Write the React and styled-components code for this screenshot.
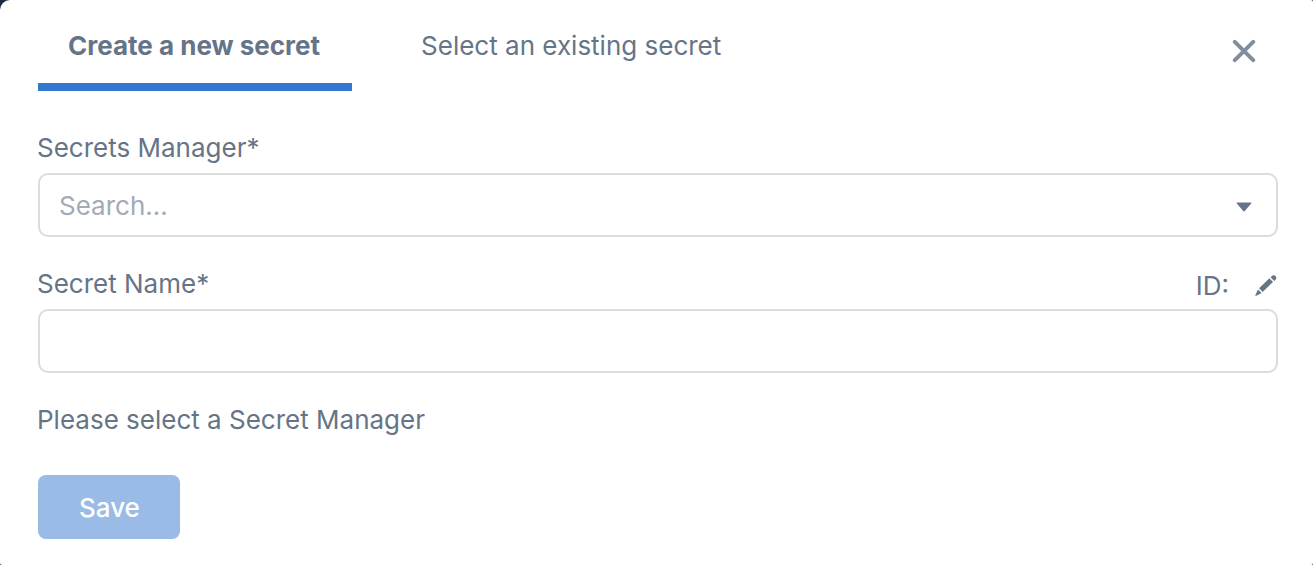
import React, { useState } from "react";
import styled, { createGlobalStyle } from "styled-components";

const GlobalStyle = createGlobalStyle`
  *, *::before, *::after { box-sizing: border-box; }
  body {
    margin: 0;
    background: #1c2b45;
    font-family: Inter, "Liberation Sans", sans-serif;
    font-size: 26px;
    line-height: 32px;
    color: #667488;
  }
  button, input { font: inherit; color: inherit; }
`;

const Dialog = styled.section`
  display: flex;
  flex-direction: column;
  min-height: 100vh;
  padding: 0 35px 26px 37px;
  background: #fff;
  border-radius: 10px 2px 2px 2px;
`;

const Header = styled.header`
  display: flex;
  align-items: flex-start;
  justify-content: space-between;
  margin: 0 0 41px 1px;
`;

const Tabs = styled.div`
  display: flex;
  gap: 39px;
`;

const Tab = styled.button`
  padding: 30px 32px 21px 30px;
  border: 0;
  border-bottom: 8px solid ${(p) => (p.$active ? "#3278cf" : "transparent")};
  background: none;
  font-weight: ${(p) => (p.$active ? 700 : 400)};
  cursor: pointer;
`;

const IconButton = styled.button`
  display: flex;
  padding: 0;
  border: 0;
  background: none;
  cursor: pointer;
`;

const CloseButton = styled(IconButton)`
  margin: 39px 22px 0 0;
`;

const Form = styled.form`
  display: flex;
  flex-direction: column;
  align-items: stretch;
`;

const Field = styled.div`
  margin-bottom: 31px;
`;

const LabelRow = styled.div`
  display: flex;
  align-items: flex-start;
  justify-content: space-between;
  min-height: 34px;
  margin-bottom: 7px;
`;

const Identifier = styled.div`
  display: flex;
  align-items: center;
  gap: 26px;
  padding: 2px 1px 0 0;
`;

const Control = styled.div`
  display: flex;
  align-items: center;
  height: 64px;
  margin-left: 1px;
  border: 2px solid #dcdcdc;
  border-radius: 10px;
  padding: 0 24px 0 19px;
  background: #fff;
`;

const TextInput = styled.input`
  flex: 1;
  min-width: 0;
  height: 100%;
  padding: 0;
  border: 0;
  outline: 0;
  background: none;
  &::placeholder { color: #a2abb6; opacity: 1; }
`;

const Message = styled.p`
  margin: 0 0 39px;
`;

const SaveButton = styled.button`
  align-self: flex-start;
  height: 64px;
  margin-left: 1px;
  padding: 2px 40px 0 41px;
  border: 0;
  border-radius: 8px;
  background: #99bbe6;
  color: #fff;
  font-weight: 500;
`;

export default function App() {
  const [tab, setTab] = useState("create");
  return (
    <>
      <GlobalStyle />
      <Dialog role="dialog" aria-label="Secret">
        <Header>
          <Tabs role="tablist">
            <Tab type="button" role="tab" aria-selected={tab === "create"} $active={tab === "create"} onClick={() => setTab("create")}>
              Create a new secret
            </Tab>
            <Tab type="button" role="tab" aria-selected={tab === "select"} $active={tab === "select"} onClick={() => setTab("select")}>
              Select an existing secret
            </Tab>
          </Tabs>
          <CloseButton type="button" aria-label="Close">
            <svg width="24" height="24" viewBox="0 0 24 24" fill="none" stroke="#808ea1" strokeWidth="4" strokeLinecap="round">
              <path d="M2.800 2.800 21.200 21.200M21.200 2.800 2.800 21.200" />
            </svg>
          </CloseButton>
        </Header>
        <Form>
          <Field>
            <LabelRow>
              <label htmlFor="manager">Secrets Manager*</label>
            </LabelRow>
            <Control>
              <TextInput id="manager" role="combobox" aria-expanded="false" placeholder="Search..." />
              <IconButton type="button" aria-label="Show secrets managers">
                <svg width="16" height="14" viewBox="0 0 16 14" fill="#667488">
                  <path d="M1.200 4.500h13.600q1.200 0 .4.900l-6.400 7.600q-.8.800-1.600 0l-6.400-7.600q-.8-.9.400-.9z" />
                </svg>
              </IconButton>
            </Control>
          </Field>
          <Field>
            <LabelRow>
              <label htmlFor="name">Secret Name*</label>
              <Identifier>
                ID:
                <IconButton type="button" aria-label="Edit ID">
                  <svg width="22" height="22" viewBox="0 0 22 22" fill="#667488">
                    <path d="M15.600 2.300 16.900 1q1.700-1.600 3.500 0t.1 3.700L19.200 6z" />
                    <path d="M14.400 3.300 18 6.900 7.700 16.900 4.100 13.300z" />
                    <path d="M3 14.500 6.600 18.100 1.300 20.700q-1.300.5-.9-.8z" />
                  </svg>
                </IconButton>
              </Identifier>
            </LabelRow>
            <Control>
              <TextInput id="name" />
            </Control>
          </Field>
          <Message>Please select a Secret Manager</Message>
          <SaveButton type="submit" disabled>Save</SaveButton>
        </Form>
      </Dialog>
    </>
  );
}
